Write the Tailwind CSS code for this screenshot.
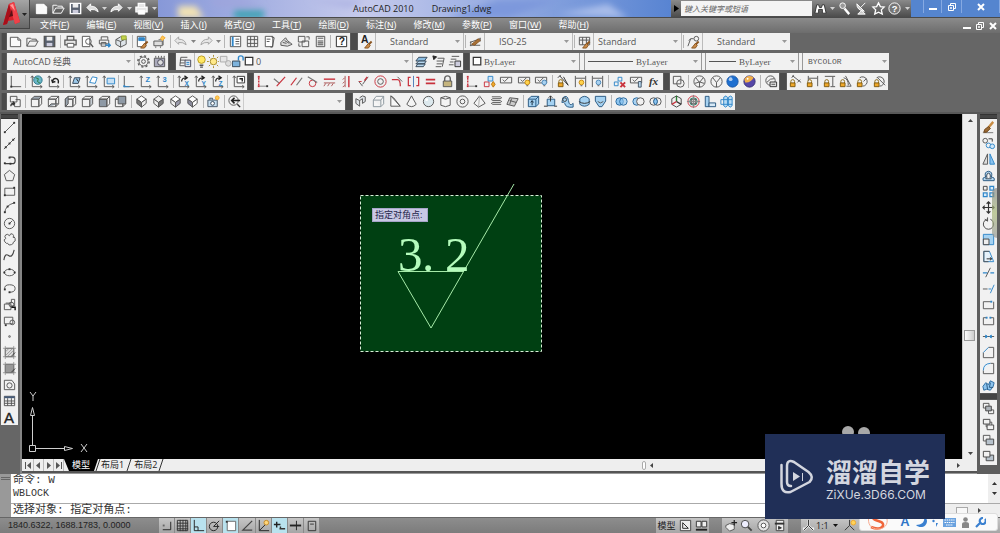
<!DOCTYPE html>
<html lang="zh-CN">
<head>
<meta charset="utf-8">
<meta name="viewport" content="width=device-width, initial-scale=1">
<title>AutoCAD 2010 - Drawing1.dwg</title>
<script src="https://cdn.jsdelivr.net/npm/@tailwindcss/browser@4"></script>
</head>
<body class="relative h-screen min-h-[500px] flex flex-col overflow-hidden bg-[#666] font-['Open_Sans','Noto_Sans_CJK_SC',sans-serif] text-[#555]">

<!-- Title bar -->
<header class="relative shrink-0">
  <div class="flex h-[17px] bg-linear-to-r from-[#8497d6] via-[#c9cdec] to-[#5483cf]">
    <div data-icons="new open save undo caret redo caret print caret" class="shrink-0 flex w-[158px] pl-[33px] bg-linear-to-b from-[#8a8a8a] to-[#4c4c4c] text-white"></div>
    <div class="relative flex-1 min-w-0 overflow-hidden bg-linear-to-r from-[#8798d8] via-[#c6caec] via-40% to-[#5884d2]">
      <svg class="absolute inset-0 w-full h-full" preserveAspectRatio="none" viewBox="0 0 513 17" aria-hidden="true">
        <defs><filter id="soft" x="-30%" y="-50%" width="160%" height="200%"><feGaussianBlur stdDeviation="3"/></filter></defs>
        <g filter="url(#soft)">
          <path d="M20 6h18l8 12H20z" fill="#f3e3b4"/><path d="M76 10h30v9H76z" fill="#43a3b5"/><path d="M50 0h35l20 6H60z" fill="#9fa4dc"/>
          <path d="M150 0h60l-20 8z" fill="#b0b6e4"/><path d="M340 0h60l-50 18h-60z" fill="#7d98dc"/><path d="M400 14l50-10 20 14z" fill="#a9bdea"/>
        </g>
      </svg>
      <h1 class="relative pl-[195px] flex gap-[18px] text-[9px] leading-[17px] text-[#222] whitespace-nowrap"><span>AutoCAD 2010</span><span>Drawing1.dwg</span></h1>
    </div>
    <div class="shrink-0 flex w-[240px] bg-linear-to-b from-[#8a8a8a] to-[#4c4c4c] text-white">
      <button aria-label="展开搜索" class="w-[10px] flex items-center justify-center text-black"><svg class="w-[5px] h-[7px]" viewBox="0 0 5 7"><path d="M0 0l5 3.500-5 3.500z" fill="currentColor"/></svg></button>
      <input type="search" aria-label="搜索" placeholder="键入关键字或短语" class="my-px w-[131px] h-[15px] bg-[#f4f4f4] pl-[3px] text-[8px] italic text-[#555] placeholder:text-[#666] outline-none">
      <div data-icons="binoculars caret key dish star helpround caret" class="flex flex-1"></div>
    </div>
    <div class="shrink-0 flex w-[89px] h-[17px] pl-3 pb-1 bg-[#5585cf] text-white">
      <button aria-label="最小化" class="w-[19px] flex items-center justify-center border-x border-[#86a9e2]"><svg class="size-[10px]" viewBox="0 0 10 10"><path d="M1 6h8v2H1z" fill="#fff"/></svg></button>
      <button aria-label="还原" class="w-[20px] flex items-center justify-center border-r border-[#86a9e2]"><svg class="size-[10px]" viewBox="0 0 10 10" fill="none" stroke="#fff"><path d="M3.500 3V1.500h5v5H7M1.500 3.500h5v5h-5zM3.500 5.500h1v1h-1z"/></svg></button>
      <button aria-label="关闭" class="flex-1 flex items-center justify-center border-r border-[#86a9e2]"><svg class="size-[10px]" viewBox="0 0 10 10" stroke="#fff" stroke-width="2"><path d="M2 2l6 6M8 2l-6 6"/></svg></button>
    </div>
  </div>
  <nav class="flex items-center h-4 pl-10 pr-[2px] gap-[17px] border-t border-[#4a4a4a] bg-linear-to-b from-[#8b8b8b] to-[#6d6d6d] font-['Liberation_Sans','Noto_Sans_CJK_SC',sans-serif] text-[9px] leading-[15px] text-white whitespace-nowrap">
    <a href="#">文件(<u>F</u>)</a><a href="#">编辑(<u>E</u>)</a><a href="#">视图(<u>V</u>)</a><a href="#">插入(<u>I</u>)</a><a href="#">格式(<u>O</u>)</a><a href="#">工具(<u>T</u>)</a><a href="#">绘图(<u>D</u>)</a><a href="#">标注(<u>N</u>)</a><a href="#">修改(<u>M</u>)</a><a href="#">参数(<u>P</u>)</a><a href="#">窗口(<u>W</u>)</a><a href="#">帮助(<u>H</u>)</a>
    <div class="ml-auto flex gap-[3px]">
      <button aria-label="最小化图形"><svg class="size-[10px]" viewBox="0 0 10 10"><path d="M1 6h8v2H1z" fill="#fff"/></svg></button>
      <button aria-label="还原图形"><svg class="size-[10px]" viewBox="0 0 10 10" fill="none" stroke="#fff"><path d="M3.500 3V1.500h5v5H7M1.500 3.500h5v5h-5zM3.500 5.500h1v1h-1z"/></svg></button>
      <button aria-label="关闭图形"><svg class="size-[10px]" viewBox="0 0 10 10" stroke="#fff" stroke-width="2"><path d="M2 2l6 6M8 2l-6 6"/></svg></button>
    </div>
  </nav>
  <button aria-label="应用程序菜单" class="absolute left-0 top-0 w-[30px] h-[29px] border-r border-b border-[#444] bg-linear-to-b from-[#a5a5a5] to-[#686868]">
    <svg class="w-[29px] h-[28px]" viewBox="0 0 29 28"><path d="M3 25 9 4l5-2 6 20-5 2-1-4-6 1-1 3z" fill="#d3212b"/><path d="M9 4l5-2 6 20-5 2z" fill="#ef4149"/><path d="M3 25 9 4l2 8-4 12z" fill="#a80f1a"/><path d="M9 17l3-8 1 7z" fill="#5d1015"/><path d="M10 5l3-1 2 7z" fill="#ff9a98"/><path d="M22 13h5l-2.500 3z" fill="#222"/></svg>
  </button>
</header>

<!-- Toolbars -->
<div class="shrink-0 flex flex-col gap-[3px] pb-[2px] pl-px">
  <div class="flex h-[17px]">
    <i class="w-[6px] bg-[#4b4b4b] border-x border-[#5c5c5c]"></i>
    <div data-icons="new open save | print preview publish dwf | match blockedit | undodim caret redodim caret | props design palette sheet markup calc | help" class="flex w-[343px] bg-[#f1f1f1]"></div>
    <i class="w-[8px] bg-[#4b4b4b] border-x border-[#5c5c5c]"></i>
    <div class="flex w-[432px] bg-[#f1f1f1]">
      <div data-icons="textstyle" class="flex w-[17px]"></div>
      <label data-combo class="flex w-[88px] pl-[14px] pr-[3px] items-center border-l border-[#bbb]"><select aria-label="文字样式" class="flex-1 min-w-0 appearance-none text-[9px] leading-3 outline-none"><option>Standard</option></select></label>
      <div data-icons="| dimstyle" class="flex w-[21px] border-l border-[#bbb]"></div>
      <label data-combo class="flex w-[88px] pl-[14px] pr-[3px] items-center border-l border-[#bbb]"><select aria-label="标注样式" class="flex-1 min-w-0 appearance-none text-[9px] leading-3 outline-none"><option>ISO-25</option></select></label>
      <div data-icons="| tablestyle" class="flex w-[21px] border-l border-[#bbb]"></div>
      <label data-combo class="flex w-[88px] pl-1 pr-[3px] items-center border-l border-[#bbb]"><select aria-label="表格样式" class="flex-1 min-w-0 appearance-none text-[9px] leading-3 outline-none"><option>Standard</option></select></label>
      <div data-icons="| leaderstyle" class="flex w-[21px] border-l border-[#bbb]"></div>
      <label data-combo class="flex flex-1 pl-[14px] pr-[3px] items-center border-l border-[#bbb]"><select aria-label="多重引线样式" class="flex-1 min-w-0 appearance-none text-[9px] leading-3 outline-none"><option>Standard</option></select></label>
    </div>
  </div>
  <div class="flex h-[17px]">
    <i class="w-[6px] bg-[#4b4b4b] border-x border-[#5c5c5c]"></i>
    <div class="flex w-[161px] bg-[#f1f1f1]">
      <label data-combo class="flex flex-1 pl-[6px] pr-[3px] items-center"><select aria-label="工作空间" class="flex-1 min-w-0 appearance-none text-[9px] leading-3 outline-none"><option>AutoCAD 经典</option></select></label>
      <div data-icons="gear workspace" class="flex w-[34px] border-l border-[#ccc]"></div>
    </div>
    <i class="w-[8px] bg-[#4b4b4b] border-x border-[#5c5c5c]"></i>
    <div class="flex w-[287px] bg-[#f1f1f1]">
      <div data-icons="layers" class="flex w-[18px]"></div>
      <label data-combo class="flex flex-1 pr-[3px] items-center border-l border-[#bbb]"><span data-icons="bulb sun vpfreeze unlock swatch" class="flex w-[61px] h-full"></span><select aria-label="图层" class="flex-1 min-w-0 appearance-none text-[9px] leading-3 outline-none"><option>0</option></select></label>
      <div data-icons="layerset layerprev layerstate" class="flex w-[51px] border-l border-[#bbb]"></div>
    </div>
    <i class="w-[7px] bg-[#4b4b4b] border-x border-[#5c5c5c]"></i>
    <div class="flex w-[419px] bg-[#f1f1f1]">
      <label data-combo class="flex w-[109px] pr-[3px] items-center"><span data-icons="swatch" class="flex w-[14px] h-full"></span><select aria-label="颜色" class="flex-1 min-w-0 appearance-none font-['Liberation_Serif',serif] text-[9px] leading-3 outline-none"><option>ByLayer</option></select></label>
      <i class="w-[6px] border-x border-[#999]"></i>
      <label data-combo class="flex w-[116px] pl-[3px] pr-[3px] gap-[3px] items-center"><span class="w-[45px] h-px bg-[#555]"></span><select aria-label="线型" class="flex-1 min-w-0 appearance-none font-['Liberation_Serif',serif] text-[9px] leading-3 outline-none"><option>ByLayer</option></select></label>
      <i class="w-[5px] border-x border-[#999]"></i>
      <label data-combo class="flex w-[92px] pl-[3px] pr-[3px] gap-[3px] items-center"><span class="w-[27px] h-px bg-[#555]"></span><select aria-label="线宽" class="flex-1 min-w-0 appearance-none font-['Liberation_Serif',serif] text-[9px] leading-3 outline-none"><option>ByLayer</option></select></label>
      <i class="w-[5px] border-x border-[#999]"></i>
      <label data-combo class="flex flex-1 pl-[5px] pr-[2px] items-center"><select aria-label="打印样式" class="flex-1 min-w-0 appearance-none font-['Liberation_Mono',monospace] text-[8px] leading-3 outline-none"><option>BYCOLOR</option></select></label>
    </div>
  </div>
  <div class="flex h-[17px]">
    <i class="w-[6px] bg-[#4b4b4b] border-x border-[#5c5c5c]"></i>
    <div data-icons="ucs | ucsworld ucsprev | ucsface ucsobject ucsview | ucsorigin ucsz ucs3 | ucsrx ucsry ucsrz | ucsapply" class="flex w-[240px] bg-[#f1f1f1]"></div>
    <i class="w-[7px] bg-[#4b4b4b] border-x border-[#5c5c5c]"></i>
    <div data-icons="coincident perpendicular parallel tangent horizontal vertical collinear concentric smooth symmetric equal fix" class="flex w-[202px] bg-[#f1f1f1]"></div>
    <i class="w-[7px] bg-[#4b4b4b] border-x border-[#5c5c5c]"></i>
    <div data-icons="coincident autocon conshow conbulb conhide | lockarc dimbulb dimhide | delcon conset fx" class="flex w-[200px] bg-[#f1f1f1]"></div>
    <i class="w-[7px] bg-[#4b4b4b] border-x border-[#5c5c5c]"></i>
    <div data-icons="wire2d | wire3d hidden realistic conceptual | stylemgr" class="flex w-[109px] bg-[#f1f1f1]"></div>
    <i class="w-[8px] bg-[#4b4b4b] border-x border-[#5c5c5c]"></i>
    <div data-icons="dimalign dimhor dimver dimang dimrad dimdia" class="flex w-[101px] bg-[#f1f1f1]"></div>
  </div>
  <div class="flex h-[17px]">
    <i class="w-[6px] bg-[#4b4b4b] border-x border-[#5c5c5c]"></i>
    <div class="flex w-[338px] bg-[#f1f1f1]">
      <div data-icons="namedview | vtop vbottom vleft vright vfront vback | isosw isose isone isonw | camera | prevview" class="flex w-[236px]"></div>
      <label data-combo class="flex flex-1 pl-1 pr-[3px] items-center border-l border-[#ccc]"><select aria-label="视图" class="flex-1 min-w-0 appearance-none text-[9px] leading-3 outline-none"><option></option></select></label>
    </div>
    <i class="w-[8px] bg-[#4b4b4b] border-x border-[#5c5c5c]"></i>
    <div data-icons="polysolid box wedge cone sphere cylinder torus pyramid helix planesurf | extrude presspull sweep revolve loft | union subtract intersect | gizmo rotate3d align3d array3d" class="flex w-[382px] bg-[#f1f1f1]"></div>
  </div>
</div>

<!-- Work area -->
<main class="flex-1 min-h-0 flex border-t-2 border-[#585858]">
  <div class="shrink-0 w-[22px] pl-px border-r-2 border-[#858585]">
    <div class="w-[17px] flex flex-col">
      <i class="h-[5px] bg-[#444] border-y border-[#333]"></i>
      <div data-icons="line xline pline polygon rect arc circle revcloud spline ellipse ellarc insert block point hatch gradient region table mtext" class="flex flex-col h-[306px] bg-[#f1f1f1]"></div>
    </div>
  </div>
  <div class="flex-1 min-w-0 flex flex-col">
    <div class="flex-1 min-h-0 flex">
      <div class="relative flex-1 min-w-0 bg-black overflow-hidden">
        <svg class="absolute left-px top-0 w-full h-full" aria-label="图形" fill="none" stroke="#a6eaa9">
          <rect x="337.500" y="81.500" width="181" height="156" fill="#004012" stroke="none"/>
          <rect x="337.500" y="81.500" width="181" height="156" stroke="#d8f0d8" stroke-dasharray="3 2"/>
          <path d="M491 70 408 214 375 157.500h66"/>
          <text x="375 399 422" y="157" font-family="Liberation Serif, serif" font-size="49" fill="#b5fcbc" stroke="none">3.2</text>
        </svg>
        <output class="absolute left-[350px] top-[94px] w-[56px] h-[14px] pl-[2px] bg-[#c8c8e4] border border-[#a5a5c8] text-[9px] leading-3 text-[#25254a] whitespace-nowrap">指定对角点:</output>
        <svg class="absolute left-1 bottom-0 w-[66px] h-[72px]" viewBox="0 0 66 72" fill="none" stroke="#cfcfcf"><path d="M3.500 58.500h6v6h-6zM6.500 58V28M10 61.500h28M4.500 28.500l2-8 2 8zM38.500 59.500l8 2-8 2zM4 5l3 4 3-4M7 9v5M55 57l6 8M61 57l-6 8"/></svg>
        <svg class="absolute left-[818px] bottom-[22px] w-8 h-3" viewBox="0 0 32 12" fill="#a8a8a8" aria-hidden="true"><circle cx="8" cy="7" r="6"/><circle cx="24" cy="8" r="6"/></svg>
      </div>
      <div class="relative shrink-0 w-[15px] bg-[#eee] border-l border-[#ccc] flex flex-col items-center justify-between py-1">
        <button aria-label="上滚"><svg class="w-[5px] h-[3px] mb-2 mt-px" viewBox="0 0 5 3"><path d="M0 3l2.500-3L5 3z" fill="#444"/></svg></button>
        <i class="absolute left-px top-[216px] w-[11px] h-[11px] border border-[#999] bg-linear-to-r from-white to-[#ccc]"></i>
        <button aria-label="下滚"><svg class="w-[5px] h-[3px]" viewBox="0 0 5 3"><path d="M0 0h5L2.500 3z" fill="#444"/></svg></button>
      </div>
    </div>
    <div class="shrink-0 flex items-center h-3 pl-px bg-[#eee]">
      <div class="flex h-full text-[#444]">
        <button aria-label="首个" class="w-[11px] flex items-center justify-center border-r border-[#bbb]"><svg class="size-[7px]" viewBox="0 0 7 7"><path d="M0 0h1v7H0zM6 0v7L2 3.500z" fill="#555"/></svg></button>
        <button aria-label="上一个" class="w-[10px] flex items-center justify-center border-r border-[#bbb]"><svg class="size-[7px]" viewBox="0 0 7 7"><path d="M5 0v7L1 3.500z" fill="#555"/></svg></button>
        <button aria-label="下一个" class="w-[10px] flex items-center justify-center border-r border-[#bbb]"><svg class="size-[7px]" viewBox="0 0 7 7"><path d="M2 0v7l4-3.500z" fill="#555"/></svg></button>
        <button aria-label="最后" class="w-[10px] flex items-center justify-center border-r border-[#bbb]"><svg class="size-[7px]" viewBox="0 0 7 7"><path d="M6 0h1v7H6zM1 0v7l4-3.500z" fill="#555"/></svg></button>
      </div>
      <div class="flex h-full items-center text-[9px] leading-3 text-[#222] whitespace-nowrap">
        <svg class="w-[6px] h-3" viewBox="0 0 6 12"><path d="M0 0h6v12H5z" fill="#000"/></svg>
        <a href="#" class="bg-black px-[2px] text-white">模型</a>
        <svg class="w-[9px] h-3" viewBox="0 0 9 12"><path d="M0 0h6L2 12H0z" fill="#000"/><path d="M8 0 4 12" stroke="#333"/></svg>
        <a href="#">布局1</a>
        <svg class="w-[10px] h-3" viewBox="0 0 10 12"><path d="M7 0 3 12" stroke="#333"/></svg>
        <a href="#">布局2</a>
        <svg class="w-[8px] h-3" viewBox="0 0 8 12"><path d="M6 0 2 12" stroke="#333"/></svg>
      </div>
      <div class="ml-auto flex items-center justify-between w-[335px] h-full pr-[17px]">
        <span class="flex items-center gap-1"><i class="w-1 h-[9px] rounded-sm border border-[#aaa] bg-white"></i><svg class="w-[3px] h-[5px]" viewBox="0 0 3 5"><path d="M3 0v5L0 2.500z" fill="#444"/></svg></span>
        <svg class="w-[3px] h-[5px]" viewBox="0 0 3 5"><path d="M0 0v5l3-2.500z" fill="#444"/></svg>
      </div>
    </div>
    <div class="h-[3px] bg-[#555] border-b border-[#999]"></div>
  </div>
  <div class="shrink-0 w-[23px] pl-[3px] bg-[#5e5e5e]">
    <div class="relative w-[17px] flex flex-col">
      <i class="h-[5px] bg-[#444] border-y border-[#333]"></i>
      <div data-icons="erase copy mirror offset array move rotate scale stretch trim extend breakpt break join chamfer fillet explode" class="flex flex-col h-[274px] bg-[#f1f1f1]"></div>
      <i class="h-[7px] bg-[#444] border-y border-[#555]"></i>
      <div data-icons="front back above under" class="flex flex-col h-[65px] bg-[#f1f1f1]"></div>
      <i class="absolute right-0 top-[74px] w-[5px] h-[50px] rounded-l-full bg-linear-to-b from-[#888] via-[#a8b878] to-[#999] opacity-70"></i>
    </div>
  </div>
</main>

<!-- Command line -->
<section aria-label="命令行" class="shrink-0 flex h-[43px] bg-white font-['Liberation_Mono','Noto_Sans_CJK_SC',monospace] text-[11px] text-[#333]">
  <div class="w-[11px] bg-[#999] pt-[3px]"><i class="block mx-px h-[3px] border-y border-[#666]"></i></div>
  <div class="flex-1 min-w-0 flex flex-col">
    <div class="flex h-[30px] border-b border-[#aaa]">
      <div class="flex-1 pl-[2px] leading-[13px] overflow-hidden"><p>命令: W</p><p class="text-[10px]">WBLOCK</p></div>
      <div class="w-3 bg-[#eee] flex flex-col items-center justify-evenly">
        <svg class="w-[5px] h-[3px]" viewBox="0 0 5 3"><path d="M0 3l2.500-3L5 3z" fill="#333"/></svg>
        <svg class="w-[5px] h-[3px]" viewBox="0 0 5 3"><path d="M0 0h5L2.500 3z" fill="#333"/></svg>
      </div>
    </div>
    <div class="flex flex-1">
      <label class="flex flex-1 pl-[2px] items-center whitespace-nowrap leading-[13px]">选择对象: 指定对角点:<input aria-label="命令输入" class="flex-1 min-w-0 outline-none"></label>
      <div class="flex items-center gap-[10px] w-[60px] pl-4 bg-[#eee]"><i class="w-3 h-[8px] border border-[#aaa] bg-[#f8f8f8]"></i><svg class="w-[3px] h-[5px]" viewBox="0 0 3 5"><path d="M0 0v5l3-2.500z" fill="#444"/></svg></div>
    </div>
  </div>
</section>

<!-- Status bar -->
<footer class="shrink-0 flex h-4 bg-linear-to-b from-[#8d8d8d] to-[#7c7c7c] border-t border-[#666] text-[#222]">
  <output class="w-[159px] pl-2 font-['Liberation_Sans',sans-serif] text-[9px] leading-[15px] whitespace-nowrap">1840.6322, 1688.1783, 0.0000</output>
  <div data-icons="snap grid ortho polar osnap otrack ducs dyn lwt qp" data-lit="ortho osnap dyn" class="flex w-[161px] bg-linear-to-b from-[#c6c6c6] to-[#a6a6a6]"></div>
  <div class="flex-1"></div>
  <div class="flex w-[53px] bg-linear-to-b from-[#c6c6c6] to-[#a6a6a6]">
    <button class="w-[21px] text-[9px] leading-[15px] text-[#222] whitespace-nowrap">模型</button>
    <div data-icons="quicklayout quickview" class="flex flex-1"></div>
  </div>
  <div class="w-[13px]"></div>
  <div data-icons="pan zoom wheel showmotion" class="flex w-[66px] bg-linear-to-b from-[#c6c6c6] to-[#a6a6a6]"></div>
  <div class="w-[13px]"></div>
  <div class="flex w-[199px] bg-linear-to-b from-[#c6c6c6] to-[#a6a6a6]">
    <div data-icons="annoscale" class="flex w-[15px]"></div>
    <button class="flex items-center gap-1 text-[9px] leading-[15px]">1:1<svg class="w-[5px] h-[3px]" viewBox="0 0 5 3"><path d="M0 0h5L2.500 3z" fill="#111"/></svg></button>
    <div data-icons="annovis" class="flex w-[17px] ml-1"></div>
  </div>
</footer>

<!-- Input-method bar -->
<div class="absolute right-[2px] bottom-[2px] w-[139px] h-[18px] rounded-[3px] bg-[#fafafa] border border-[#ddd] flex items-center pl-[6px] gap-[5px]">
  <svg class="w-[24px] h-[18px] mr-1" viewBox="0 0 24 18" fill="none" stroke="#f0653a" stroke-width="2.500"><path d="M17 1C10-1 5 1 7 5s9 2 10 6-5 6-12 3"/><path d="M3 3c-2 8 2 13 9 13s10-5 9-10" stroke="#f7a98e" stroke-width="1"/></svg>
  <b class="w-3 text-center font-['Liberation_Sans',sans-serif] text-[13px] leading-4 text-[#3077c8]">A</b>
  <svg class="size-[11px]" viewBox="0 0 11 11"><path d="M8 0c1 5-2 8-8 8 4 4 11 2 11-4 0-2-1-3-3-4z" fill="#3a80d0"/></svg>
  <svg class="w-[6px] h-[10px]" viewBox="0 0 6 10"><circle cx="1.500" cy="4" r="1.200" fill="#3a80d0"/><path d="M4 6h2L4 10z" fill="#3a80d0"/></svg>
  <svg class="w-[13px] h-[9px]" viewBox="0 0 13 9"><path d="M0 0h13v9H0z" fill="#6aa2df"/><path d="M1.500 2h10M1.500 4.500h10M3 7h7" stroke="#fff" stroke-dasharray="1.500 .7"/></svg>
  <svg class="w-[9px] h-[11px]" viewBox="0 0 9 11" fill="#888"><circle cx="4.500" cy="2.500" r="2.300"/><path d="M1 11V7q0-2 3.500-2T8 7v4z"/></svg>
  <svg class="size-[11px]" viewBox="0 0 11 11" fill="none" stroke="#3a80d0" stroke-width="2.200"><path d="M1 10l5-5M10 2a3 3 0 1 1-2-1"/></svg>
</div>

<!-- Brand badge -->
<aside class="absolute right-[55px] bottom-[14px] w-[180px] h-[85px] bg-[#202f57] flex items-center gap-3 pl-[15px] text-[#d3d6df]">
  <svg class="shrink-0 w-[34px] h-[36px]" viewBox="0 0 34 36" fill="none" stroke="#d3d6df" stroke-width="2.500"><path d="M1.500 6v19q0 10 9 8l19-10q5-5-1-10L14 3Q7 0 7 7v16q0 4 4 4" stroke-linejoin="round" stroke-linecap="round"/><path d="M13 13v9l7-4.500z" fill="#d3d6df" stroke="none"/><path d="M22.500 14v8" stroke-width="1"/></svg>
  <div class="flex flex-col whitespace-nowrap">
    <strong class="font-['Noto_Sans_CJK_SC',sans-serif] text-[26px] leading-9 font-bold">溜溜自学</strong>
    <span class="font-['Inter',sans-serif] text-[12px] leading-3">ZiXUe.3D66.COM</span>
  </div>
</aside>

<script>
const B = '#2f86c9', R = '#c8313c', Y = '#f0a82a';
const p = (d, s = 'currentColor', f = 'none', w = 1) => `<path d="${d}" stroke="${s}" fill="${f}" stroke-width="${w}"/>`;
const c = (x, y, r, s = 'currentColor', f = 'none') => `<circle cx="${x}" cy="${y}" r="${r}" stroke="${s}" fill="${f}"/>`;
const t = (s, x, y, z, col = 'currentColor') => `<text x="${x}" y="${y}" font-size="${z}" font-weight="700" font-family="Liberation Sans, sans-serif" fill="${col}" stroke="none">${s}</text>`;
const axes = p('M3.5 2v11.500H14M2 4l1.500-2L5 4M12 12l2 1.500L12 15');
const lock = p('M3 10V8q0-2 2-2t2 2v2', '#8a6a1a') + p('M2.500 9.500h5v4h-5z', '#7d5a10', Y);
const bulb = (x, y, f = '#ffd34d') => c(x, y, 2.5, f === '#ffd34d' ? '#c88a10' : '#4a86b8', f) + p(`M${x - 1} ${y + 3.500}h2`);
const chk = p('M1.500 3.500h12v6h-12z') + p('M4 6l2 2 4-4');
const sphere = (a, b) => `<circle cx="8" cy="8" r="6" fill="${a}" stroke="${b}"/><circle cx="6" cy="5.500" r="2" fill="#fff" opacity=".65" stroke="none"/>`;
const cube = (a = 'none', b = 'none', d = 'none') => p('M2.500 5.500h8v8h-8z', 'currentColor', a) + p('M2.500 5.500l3-3h8l-3 3z', 'currentColor', b) + p('M10.500 5.500l3-3v8l-3 3z', 'currentColor', d);
const iso = (a, b, d) => p('M8 2l5 3.500-5 3.500-5-3.500z', 'currentColor', a) + p('M3 5.500v4.500l5 4V9z', 'currentColor', b) + p('M13 5.500v4.500l-5 4V9z', 'currentColor', d);
const dot = (x, y, f = '#333') => `<rect x="${x - 1}" y="${y - 1}" width="2" height="2" fill="${f}" stroke="none"/>`;
const G = '#8a949c';
const brush = p('M13.500 8l-4 4', '#8b5520', 'none', 2) + p('M10 10l2 2-2 3-4 0z', '#8b5520', '#c98b4a');
const icons = {
  new: p('M2.500 3.500h8l3 3v7h-11z', 'currentColor', '#fafafa') + p('M10.500 3.500v3h3'),
  open: p('M2 13V4.500h4l1 1h5v2') + p('M2 13l3-5.500h9L11 13z'),
  save: p('M2.500 2.500h11v11h-11z', 'currentColor', '#59616f', 1.500) + p('M5 3h6v4H5z', 'none', '#eee') + p('M5 9.500h6V13H5z', 'none', '#ccd'),
  undo: p('M2 7l4-4v2.500q7 0 8 6-3-3-8-2.500v2z', 'currentColor', '#ddd'),
  redo: p('M14 7l-4-4v2.500q-7 0-8 6 3-3 8-2.500v2z', 'currentColor', '#ddd'),
  undodim: p('M2 7l4-4v2.500q7 0 8 6-3-3-8-2.500v2z', '#a2a2a2', '#e6e6e6'),
  redodim: p('M14 7l-4-4v2.500q-7 0-8 6 3-3 8-2.500v2z', '#a2a2a2', '#e6e6e6'),
  print: p('M4.500 6V2.500h7V6M2 6.500h12v5H2z', 'currentColor', '#e6e6e6', 1.300) + p('M4.500 10h7v4h-7z', 'currentColor', '#fff'),
  preview: p('M2.500 2.500h8v11h-8z', 'currentColor', '#fff') + c(9, 8, 3) + p('M11 10l3 4', 'currentColor', 'none', 1.500),
  publish: p('M4.500 6V3h7v3M2.500 6.500h10v4h-10zM4.500 9h5v4h-5z') + p('M9 12h5M12 10l2 2-2 2', B, 'none', 1.600),
  dwf: p('M2 6l5-3 6 2v6l-6 3-5-3z', '#555', '#dde3e8') + p('M7 8V14M2 6l5 2 6-3') + p('M8 2h5v4H8z', '#96a838', '#c2d24a'),
  match: p('M2.500 2.500h9v11h-9z', 'currentColor', '#fff') + p('M4 4h6v3H4z', B, B) + brush,
  blockedit: p('M2 12.500h9v-5H2z', 'currentColor', '#ddd') + p('M4 13v2M9 13v2M7 6h5v6', '#777') + p('M11 2l3 2-3 3-2-2z', Y, '#ffc75a'),
  props: p('M2.500 2.500h11v11h-11z', 'currentColor', '#fff') + p('M5 3v10', B, 'none', 2) + p('M8 5.500h4M8 8h4M8 10.500h4'),
  design: p('M2.500 2.500h11v11h-11zM2.500 6h11M2.500 10h11M6 2.500v11M10 2.500v11'),
  palette: p('M3.500 2.500h8v11h-8z', 'currentColor', '#fff') + p('M10 3l3 1-2 10h-2M5 5.500h4M5 8h3'),
  sheet: p('M2 9l5-5 2 3 5 4-5 2-7-1z', 'currentColor', '#ddd') + p('M4 9l4 1M6 7l5 3'),
  markup: p('M2.500 2.500h7v6h-7zM6.500 7.500h7v6h-7z') + p('M11 3h3v3M3 10v3h2', '#555'),
  calc: p('M3.500 2.500h9v11h-9zM5 4.500h6') + p('M5 7.500h6M5 9.500h6M5 11.500h6', 'currentColor', 'none', 1.200),
  help: p('M2.500 2.500h11v11h-11z', '#222', '#fff') + t('?', 5, 12, 11, '#222'),
  textstyle: t('A', 2, 10, 11, '#222') + brush,
  dimstyle: p('M2 12h11M2 9l11-4M3 8v5M13 4v4') + p('M4 11l7-6 2 2-6 5z', '#8b5520', '#a87238'),
  tablestyle: p('M2.500 3.500h11v8h-11zM2.500 6.500h11M6 3.500v8M10 3.500v8') + brush,
  leaderstyle: p('M2 13l3-8h3M5 5L3 7') + c(11, 5, 2.5) + brush,
  gear: `<circle cx="8" cy="8" r="6" stroke-width="1.500" stroke-dasharray="2.200 2.500" fill="none"/>` + c(8, 8, 4.800) + c(8, 8, 2),
  workspace: p('M2.500 4.500h11v9h-11z', 'currentColor', '#aab', 1) + p('M4 4V2M7 4V2M10 4V2M13 4V2', 'currentColor', 'none', 1) + c(9, 9, 3, '#445', '#ddd'),
  layers: p('M3 3.500h7M2 6.500h6M2 9.500h5M2 12.500h5M3 3.500l-1 9') + p('M7.500 6.500h6v7h-6z', '#445', '#dde6ef') + p('M9 9h3M9 11h3', B),
  bulb: c(8, 6, 4, '#b89a20', '#ffe764') + p('M6 12h4M6.500 14h3', '#555', 'none', 1.500),
  sun: c(8, 8, 3.5, '#a88b28', '#ffe98a') + p('M8 1v2M8 13v2M1 8h2M13 8h2M3 3l1.500 1.500M11.500 11.500L13 13M13 3l-1.500 1.500M4.500 11.500L3 13', '#a88b28'),
  vpfreeze: p('M2.500 2.500h7v6h-7z', '#aaa', '#e6e6e6') + c(11, 10, 3, '#aaa', '#ddd'),
  unlock: p('M9 7V4q0-2 2.500-2T14 4v3', B, 'none', 1.500) + p('M2.500 7.500h8v6h-8z', '#345', '#7db3dd'),
  swatch: p('M3.500 3.500h8v8h-8z', '#333', '#fff', 1.300),
  layerset: p('M5 3.500h9l-3 4H2z', '#345', '#8bbde2') + p('M5 7.500h8l-2 3H2zM4 10.500h8l-2 3H2z', '#345', '#b6d6ee'),
  layerprev: p('M7 4.500h7M6 7.500h7M6 10.500h6M5 13.500h6M14 4.500l-2 9') + p('M2 2l4 1-3 3z', '#222', '#222'),
  layerstate: p('M5 2.500h8M4 5.500h6M3 8.500h4M2 11.500h5') + p('M8.500 7.500h6v6h-6z', '#333', '#ccd'),
  ucs: p('M3.500 2v11.500H14') + dot(3.5, 13.5),
  ucsworld: axes + c(9.5, 6.5, 4.5, '#27768c', '#6ab5c6') + p('M7 4l3 1-1 3 3 2', '#267a3e'),
  ucsprev: axes + p('M7 8q1-4 4-3t2 5M6 6l1 3 3-1', '#222', 'none', 1.500),
  ucsface: axes + p('M6 10l2-6h6l-2 6z', '#345', '#9cc9ea') + p('M10 5l2 3', '#222'),
  ucsobject: axes + p('M6 9l3-6 5 1-2 6z', B, '#fff'),
  ucsview: axes + p('M6.500 4.500h8v6h-8z', B, '#c7e0f4'),
  ucsorigin: p('M3.500 2v11M3 13.500h11', '#555') + dot(3.5, 13, B) + p('M3 13.500h6', B),
  ucsz: axes + t('Z', 8, 8, 8, B), ucs3: axes + t('3', 8, 9, 8, B),
  ucsrx: axes + p('M6 8q0-4 5-4M9 2l3 2-3 2', '#222', 'none', 1.300) + t('X', 9, 13, 7, B),
  ucsry: axes + p('M6 8q0-4 5-4M9 2l3 2-3 2', '#222', 'none', 1.300) + t('Y', 9, 13, 7, B),
  ucsrz: axes + p('M6 8q0-4 5-4M9 2l3 2-3 2', '#222', 'none', 1.300) + t('Z', 9, 13, 7, B),
  ucsapply: axes + p('M6.500 2.500h8v7h-8z', '#333', '#fff') + p('M9 5h3v3', '#222', 'none', 1.500),
  coincident: `<path d="M4 4v8" stroke="${R}" stroke-width="1.500" stroke-dasharray="2 1"/>` + p('M5 13h8', '#888') + dot(4, 3, R) + dot(4, 13, R) + dot(13, 13),
  perpendicular: p('M2 5l6 5', '#777', 'none', 1.300) + p('M14 3L5 13', R, 'none', 1.300),
  parallel: p('M2 12l6-8', R, 'none', 1.300) + p('M8 12l6-8', '#777', 'none', 1.300),
  tangent: c(8, 10, 3.5, R) + p('M3 3l10 6', '#777', 'none', 1.300),
  horizontal: p('M2 5.500h12', R, 'none', 1.500) + p('M2 9.500h12M4 10l-2 3M8 10l-2 3M12 10l-2 3', '#a55'),
  vertical: p('M10.500 2v12', R, 'none', 1.500) + p('M6.500 2v12M6 4L4 6M6 8l-2 2M6 12l-2 2', '#a55'),
  collinear: p('M3 8l4 5M13 3l-6 8', '#555') + p('M12 3l-3 4', R, 'none', 1.500) + p('M3 8h3', R),
  concentric: c(8, 8, 6, R) + c(8, 8, 3, '#555'),
  smooth: p('M2 6h6q3 0 3 7', R, 'none', 1.300) + p('M8 3l5 5', '#555'),
  symmetric: p('M5 3.500H2.500v9H5M11 3.500h2.500v9H11', R, 'none', 1.300) + p('M8 2v12', '#4a7cb8', 'none', 1),
  equal: p('M3 6h10M3 10h10', R, 'none', 2),
  fix: p('M5 8V5q0-3 3-3t3 3v3', '#666', 'none', 1.500) + p('M3.500 7.500h9v6h-9z', '#555', '#c5b47d'),
  autocon: p('M2.500 8.500h5v5h-5z', R) + p('M6.500 2.500h5v5h-5z', B, '#cfe5f6') + p('M12 8l2 3-2 3-2-3z', '#b87812', Y),
  conshow: chk, conbulb: chk + bulb(11, 9), conhide: chk + bulb(11, 9, '#a9d1f0'),
  lockarc: lock + p('M4 2l9 10M8 3l5 9M2 4l3-3', '#333'),
  dimbulb: p('M2.500 2v12M13.500 2v12M3 4.500h10') + bulb(9, 9),
  dimhide: p('M2.500 2v12M13.500 2v12M3 4.500h10') + bulb(9, 9, '#a9d1f0'),
  delcon: p('M2.500 8.500h4v4h-4zM6.500 3.500h4v4h-4z', B) + p('M9 9l5 5M14 9l-5 5', R, 'none', 2),
  conset: chk + p('M10 8h3v6h-3z', '#456', '#b6d6ee'),
  fx: `<text x="2" y="12" font-size="12" font-style="italic" font-weight="700" font-family="Liberation Serif, serif" fill="#333" stroke="none">fx</text>`,
  wire2d: p('M2.500 2.500h8v8h-8z') + c(10, 10, 4),
  wire3d: c(8, 8, 6) + p('M4 4l4 5 4-5M8 9v5M3 10q5-3 10 0'), hidden: c(8, 8, 6) + p('M4 4l4 5 4-5M8 9v5'),
  realistic: sphere('#1d6fd0', '#1b58a5'),
  conceptual: `<circle cx="8" cy="8" r="6" fill="#5647a8" stroke="#3b3476"/><path d="M2.500 6a6 6 0 0 1 10-2q-4 6-9 5z" fill="#f1b04b" stroke="none"/>` + c(6, 5, 1, 'none', '#fff'),
  stylemgr: c(8, 7, 5) + p('M4 9q4-5 8-4') + p('M7.500 8.500h7v5h-7z', '#333', '#ddd') + p('M9 11h4'),
  dimalign: lock + p('M5 2l9 7M10 9l3-3M4 4l2-3'), dimhor: lock + p('M3.500 2v5M13.500 2v11M4 4.500h9'),
  dimver: lock + p('M3 2.500h11M9 13.500h5M11.500 3v10'), dimang: lock + p('M8 2l6 11H9M6 4q5 1 5 8'),
  dimrad: lock + p('M5 4a5 5 0 1 1 3 9M9 8l3-3'), dimdia: lock + p('M5 4a5 5 0 1 1 3 9M6 4l8 8'),
  namedview: p('M2.500 2.500h7v6h-7zM8 6h5v7.500H7V9') + p('M3 13q0-3 3-3M5 8l2 2-2 2', '#333', 'none', 1.300),
  vtop: cube('none', '#9aa4ae'), vbottom: cube() + p('M2.500 13.500l3-3h8', 'currentColor', '#9aa4ae'), vleft: cube() + p('M2.500 5.500l3-3v8l-3 3z', 'currentColor', '#9aa4ae'),
  vright: cube('none', 'none', '#c5ccd2'), vfront: cube('#8e99a5'), vback: cube() + p('M5.500 2.500h8v8h-8z', 'currentColor', '#8e99a5'),
  isosw: iso('#fff', '#777', '#eee'), isose: iso('#eee', '#eee', '#777'), isone: iso('#fff', '#eee', '#99a'), isonw: iso('#fff', '#889', '#fff'),
  camera: p('M2 6.500h10v7H2zM4 6V4.500h3V6', '#456', '#c7dff0') + c(7, 10, 2, '#345', '#fff') + c(12, 4, 2, Y, '#ffcb55'),
  prevview: c(7, 7, 5) + p('M5 7h9M8 4L5 7l3 3', '#222', 'none', 1.700) + p('M11 11l3 3', '#333', 'none', 1.500),
  polysolid: p('M2 5l4 2V13L2 10zM6 7l3-2v5l3-2V3L9 2 6 4', 'currentColor', '#dde1e5'),
  box: p('M2.500 6.500v7h8v-7zM2.500 6.500l3-4h8v8l-3 3M10.500 6.500l3-4', G, '#f6f6f6'),
  wedge: p('M3 2v11h10z', 'currentColor', '#f8f8f8') + p('M3 2l3 2 7 9'),
  cone: p('M8 2L3 11q5 5 10 0z', 'currentColor', '#f4f4f4'), sphere: c(8, 8, 5.5, '#555', '#dde9ee') + c(6, 6, 1.5, 'none', '#fff'),
  cylinder: p('M3 4v8q5 3 10 0V4q-5-3-10 0q5 3 10 0', '#555', '#f4f4f4'), torus: c(8, 8, 6) + c(8, 8, 2.500),
  pyramid: p('M8 2L2 10l5 4 7-4z', 'currentColor', '#f4f4f4') + p('M8 2L7 14', '#aaa'),
  helix: p('M3 3h9q3 1 0 2H4q-3 1 0 2h8q3 1 0 2H4q-3 1 0 2h9', '#555', 'none', 1),
  planesurf: p('M5 4l9 1-4 8-8-2z', 'currentColor', '#ccc') + p('M5 7l7 2M7 5l-2 6'),
  extrude: p('M2.500 5.500l3-3h8v8l-3 3h-8z', '#27567f', '#a5d2f2') + p('M2.500 5.500h8v8M10.500 5.500l3-3', '#27567f') + p('M6.500 12V8M5 9l1.500-2L8 9', '#123'),
  presspull: p('M4.500 5.500h8v7h-8z', '#27567f', '#a5d2f2') + p('M1 13h4M12 13h3M8 8V2M6 4l2-2 2 2', '#333'),
  sweep: p('M3 4q5-4 6 3t5 3v4q-8 1-9-4-1-2-3-1z', '#27567f', '#a5d2f2') + c(5, 6, 2, '#444'),
  revolve: p('M3 5q5-5 10 0v6q-5 4-10 0z', '#27567f', '#a5d2f2') + p('M2 8q6 4 12 0', '#333'),
  loft: p('M2.500 2.500h11v5l-4 6h-3l-4-6z', '#27567f', '#a5d2f2') + p('M5 8q3 3 6 0'),
  union: `<ellipse cx="6" cy="8" rx="4" ry="4" fill="#8cc4ef" stroke="#27699f"/><ellipse cx="10" cy="8" rx="4" ry="4" fill="#8cc4ef" fill-opacity=".6" stroke="#27699f"/>`,
  subtract: c(6, 8, 4, '#27699f', '#a9d3f3') + c(10, 8, 4, '#555', '#f1f1f1'),
  intersect: c(6, 8, 4) + c(10, 8, 4) + p('M8 4.500q4 3.500 0 7-4-3.500 0-7', '#27699f', '#8cc4ef'),
  gizmo: p('M8 2l5 3v6l-5 3-5-3V5z', '#444') + p('M8 8V2', '#287c34', 'none', 1.500) + p('M8 8l-5 3', R, 'none', 1.500) + p('M8 8l5 3', '#333', 'none', 1.500),
  rotate3d: c(8, 8, 6, R) + c(8, 8, 4, '#2a8a70') + p('M5.500 5.500h5v5h-5z', '#444', '#ccc') + p('M8 1v14M1 8h14', '#888'),
  align3d: p('M3.500 2.500h4v11h-4z', '#27567f', '#a5d2f2') + p('M7.500 9.500h7v4h-7z', '#27567f', '#d7e9f6'),
  array3d: p('M5 3.500q3-3 4 0v9q-2 3-4 0zM10 3.500q3-3 4 0v9q-2 3-4 0z', B, '#b7dbf5') + p('M2 6h12M2 11h12M2 6v5', B),
  line: p('M3 13L13 3') + dot(3, 13) + dot(13, 3),
  xline: p('M2 14L14 2') + dot(4, 12) + dot(8, 8) + dot(12, 4),
  pline: p('M3 12.500h6M8 5.500h3q3 0 3 3.500t-3 3.500H8', '#444', 'none', 1.300) + dot(3, 12) + dot(8, 6) + dot(9, 12.5),
  polygon: p('M8 2.500l5.500 4.500-2 6.500h-7L2.500 7z'), rect: p('M3 4.500h10.500v7.500H3z') + dot(3, 12) + dot(13, 4),
  arc: p('M3 14q0-8 10-11') + dot(3, 13) + dot(6, 7) + dot(13, 3), circle: c(8, 8, 5.5) + p('M8 8l3-3') + dot(8, 8),
  revcloud: p('M8 4Q6 1.500 4 3T4 7Q1 8 3 10.500T6 12q1 3 4 1.500T12 11q3-1 2-4T12 6q1-3-1-4T8 4z'),
  spline: p('M2 13q1-8 5-5t6-6', '#444', 'none', 1.200), ellipse: `<ellipse cx="8" cy="8" rx="5.500" ry="3.500" fill="none"/>` + dot(2.5, 8) + dot(13.5, 8) + dot(8, 4.5),
  ellarc: p('M3 9q-1-5 5-5t6 4-6 4') + dot(3, 9) + dot(8, 12),
  insert: p('M4 6.500h6v-4h3.500v7H9M2.500 7.500h7v6h-7z') + c(10, 8, 2.5) + p('M10 11h4v3', '#111', 'none', 1.500),
  block: p('M2.500 4.500h9v7h-9z') + c(11, 10, 2.500) + dot(4, 13), point: c(8, 8, 1, '#777', '#999'),
  hatch: p('M3.500 3.500h9v9h-9z', '#555', '#ddd') + p('M4 7l3-3M4 11l7-7M6 12l6-6M1 3.500h14M1 12.500h14M3.500 1v14M12.500 1v14', '#888', 'none', .8) + p('M10 12l4-4', '#333'),
  gradient: p('M3.500 3.500h9v9h-9z', '#555', '#999') + p('M1 3.500h14M1 12.500h14M3.500 1v14M12.500 1v14', '#888', 'none', .8) + p('M10 12l4-4', '#333'),
  region: p('M2.500 3.500h8l3 4v6h-11z') + c(8, 9, 2.800),
  table: p('M2.500 3.500h11v10h-11zM2.500 8.500h11M2.500 11h11M6 5.500v8M10 5.500v8') + p('M2.500 4.500h11', '#455a78', 'none', 2),
  mtext: `<text x="2" y="14" font-size="16" font-family="Liberation Sans, sans-serif" fill="#222" stroke="#222" stroke-width=".4">A</text>`,
  erase: p('M2 13.500h11', '#777') + p('M13 2L8 8', '#c78b42', 'none', 2.500) + p('M8 7l2 2-4 4H3l1-3z', '#6b4218', '#9c6a34'),
  copy: c(4.5, 5, 2.500) + c(8, 10, 2.500, B) + c(12, 11, 2.500, B, '#cfe5f6') + p('M8 3h4v3', '#333'),
  mirror: p('M7 2L2 13h5z', '#555', '#ddd') + p('M9.500 2l5 11h-5z', B, '#8cc4ef'),
  offset: p('M2.500 13.500h11.500q1-4-3-3.500 2-6-3-6.500-5 .5-3 6.500-4-.5-2.500 3.500z', '#27567f', '#b7dbf5') + p('M5 11.500h6q-2-1-1-3 0-3-2-3t-2 3q1 2-1 3z', '#345', '#f1f1f1'),
  array: p('M2.500 2.500h4v4h-4z', '#444') + p('M9.500 2.500h4v4h-4zM2.500 9.500h4v4h-4zM9.500 9.500h4v4h-4z', B, '#d8ebf8', 1.300),
  move: p('M8 2v12M2 8h12M6 4l2-2 2 2M6 12l2 2 2-2M4 6L2 8l2 2M12 6l2 2-2 2', '#333', 'none', 1.200),
  rotate: p('M10 3.500a5.500 5.500 0 1 1-4 0M7 1.500v4L4 3.500', '#444'),
  scale: p('M2.500 2.500h11v11h-11z', B, '#a5d2f2') + p('M2.500 7.500h6v6h-6z', '#444', '#eee'),
  stretch: p('M3 13.500V2.500h6l4.500 11z', B, '#e6f2fb') + p('M9 2.500H3v11h5') + p('M6 10.500h5M9.500 9l2 1.500-2 1.500', '#222'),
  trim: p('M2 8.500h5M10 8.500h4', B, 'none', 1.300) + p('M5 13l5-10'), extend: p('M10 13l4-9', B) + p('M2 8.500h5') + p('M8 8.500h3', B),
  breakpt: p('M13.500 5v7.500h-11V5h8') + dot(11, 5, B), break: p('M6 5H2.500v7.500h11V5H10') + dot(6, 5, B) + dot(10, 5, B),
  join: p('M2 8h12') + p('M5 6.500v3L7 8zM11 6.500v3L9 8z', B, B), chamfer: p('M2.500 13.500V8M8 2.500h5.500v11h-11') + p('M2.500 8L8 2.500', B),
  fillet: p('M2.500 13.500h11v-11H10M2.500 13.500V10') + p('M2.500 10q0-7 7.500-7.500', B, '#e6f2fb'),
  explode: p('M2 9l3-4 3 2 2-4 4 2-1 4-3 4-4-1-3 1z', '#27699f', '#8cc4ef') + p('M6 6l1 6M10 5l-1 5 4 0', '#27567f'),
  front: p('M2.500 2.500h6v5h-6zM8 9.500h5.500v4H8z') + p('M5 5.500h6v5H5z', '#444', '#aeb4ba'), back: p('M2.500 2.500h7v5h-7zM6.500 8.500h7v5h-7z', '#444', '#f1f1f1') + p('M5.500 7.500v3h1M9.500 5.500h2v3'),
  above: p('M2.500 2.500h7v6h-7z') + p('M5.500 6.500h8v6h-8z', '#444', '#b7c2cc'), under: p('M5.500 6.500h8v6h-8z', '#444', '#b7c2cc') + p('M2.500 2.500h7v6h-7z', '#444', '#f1f1f1'),
  binoculars: p('M2 13l2-9h2l1 3h2l1-3h2l2 9h-4V9H6v4z', '#333', '#fff'), key: p('M8 8l5 6', '#fff', 'none', 2.500) + c(6, 5, 3, '#fff', '#999'),
  dish: p('M3 3q0 7 8 8zM7 7l5-5M4 14h8l-4-4z', '#fff', '#ccc'), star: p('M8 2l2 4 4 .5-3 3 1 4.500-4-2-4 2 1-4.500-3-3L6 6z', '#fff', 'none', 1.400), helpround: c(8, 8, 6, '#fff', '#777') + t('?', 5, 12, 10, '#fff'),
  snap: p('M4 12.500h8.500V4') + dot(5, 8, '#666'), grid: p('M2.500 2.500h11v11h-11zM5.500 2v12M8.500 2v12M11.500 2v12M2 5.500h12M2 8.500h12M2 11.500h12', '#333'),
  ortho: p('M3.500 2v11.500H14M3.500 9.500h4v4'), polar: c(7, 9, 4.500) + p('M7 9l6-6M7 9h6', '#222'), osnap: p('M4.500 3.500h9v10h-9z', '#666', '#fff') + dot(4, 4), otrack: p('M13 3L3 13h10', '#444', 'none', 1.300),
  ducs: p('M3.500 2v11.500H14M4 13l7-7') + c(11, 5, 2.500, '#c48a28', '#ffd67a'), dyn: p('M2 7h7M5 4v6', '#222', 'none', 1.500) + p('M8 11.500h6M9 9v3', '#333', 'none', 1.500), lwt: p('M2 8h12', '#222', 'none', 2) + p('M9 3v10', '#222', 'none', 1), qp: p('M4.500 3.500h8v10h-8zM6.500 6.500h4', '#333'),
  quicklayout: p('M2.500 2.500h11v11h-11z', '#444', '#eee') + p('M5 5v6h6z'), quickview: p('M2.500 3.500h5v6h-5zM8.500 3.500h5v6h-5z', '#333', '#eee') + p('M2 12.500h12', '#222', 'none', 2),
  pan: p('M3 8l4-2 5 1v5l-5 2-4-4z', '#555', '#eee') + p('M12 2v6M9 5h6', '#222', 'none', 1.300), zoom: c(6.5, 6.5, 4, '#444', '#eef') + p('M9.500 9.500l4 4', '#444', 'none', 2), wheel: c(8, 8, 6, '#555', '#e5e5e5') + c(8, 8, 2.500, '#555', '#fff'),
  showmotion: p('M4.500 2.500h8v11h-8z', '#444', '#eee') + p('M3 6h10', '#333', 'none', 2) + p('M7 9v3l3-1.500z', '#333', '#333'),
  annoscale: p('M8 2v6M8 8l-5 5M8 8l5 5M6 11h-3v2M10 11h3v2', '#eee', 'none', 2) + p('M8 2v6M8 8l-5 5M8 8l5 5', '#333'), annovis: p('M7 2v6M7 8l-5 5M7 8l5 5', '#333') + c(11, 5, 2.500, Y, '#ffd45a')
};
const narrow = '<svg class="w-[5px] h-[3px]" viewBox="0 0 5 3" aria-hidden="true"><path d="M0 0h5L2.500 3z" fill="currentColor"/></svg>';
document.querySelectorAll('[data-icons]').forEach(bar => {
  const lit = (bar.dataset.lit || '').split(' ');
  const status = 'lit' in bar.dataset;
  bar.innerHTML = bar.dataset.icons.split(' ').map(name => {
    if (name === '|') return '<i class="flex-[4] flex justify-center py-[2px]"><b class="w-px bg-[#b5b5b5]"></b></i>';
    if (name === 'caret') return `<button aria-label="更多" class="flex-[8] min-w-0 flex items-center justify-center opacity-70">${narrow}</button>`;
    const tone = lit.includes(name) ? 'bg-[#b9e2ee]' : '';
    const edge = status ? 'border-r border-[#8a8a8a]' : '';
    return `<button aria-label="${name}" class="flex-[17] min-w-0 min-h-0 flex items-center justify-center overflow-hidden ${tone} ${edge}"><svg class="shrink-0 size-[15px]" viewBox="0 0 16 16" fill="none" stroke="currentColor" aria-hidden="true">${icons[name]}</svg></button>`;
  }).join('');
});
document.querySelectorAll('[data-combo]').forEach(box => box.insertAdjacentHTML('beforeend', `<span class="shrink-0 text-[#999]">${narrow}</span>`));
</script>
</body>
</html>
